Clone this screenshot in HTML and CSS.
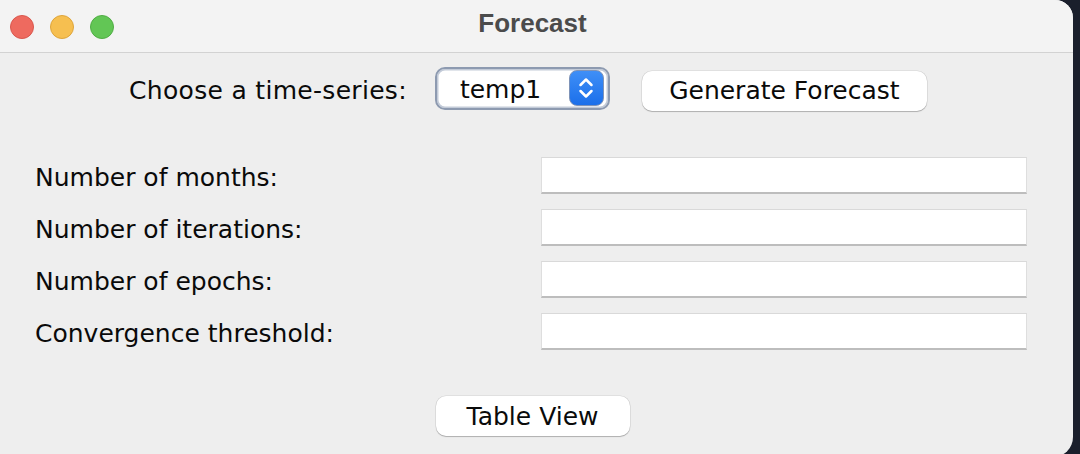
FILE: index.html
```html
<!DOCTYPE html>
<html>
<head>
<meta charset="utf-8">
<link rel="stylesheet" href="styles.css">
</head>
<body>
<div class="window">
  <div class="titlebar">
    <div class="lights">
      <span class="light red"></span>
      <span class="light yellow"></span>
      <span class="light green"></span>
    </div>
    <div class="title">Forecast</div>
  </div>
  <div class="content">
    <div class="toprow">
      <span class="label">Choose a time-series:</span>
      <div class="combo">
        <span class="combo-text">temp1</span>
        <span class="stepper">
          <svg width="20" height="26" viewBox="0 0 20 26">
            <path d="M4.5 10 L10 4.5 L15.5 10" fill="none" stroke="#fff" stroke-width="2.5" stroke-linecap="round" stroke-linejoin="round"/>
            <path d="M4.5 16 L10 21.5 L15.5 16" fill="none" stroke="#fff" stroke-width="2.5" stroke-linecap="round" stroke-linejoin="round"/>
          </svg>
        </span>
      </div>
      <button class="btn gen">Generate Forecast</button>
    </div>
    <div class="form">
      <span class="label">Number of months:</span><div class="field"></div>
      <span class="label">Number of iterations:</span><div class="field"></div>
      <span class="label">Number of epochs:</span><div class="field"></div>
      <span class="label">Convergence threshold:</span><div class="field"></div>
    </div>
    <div class="bottomrow">
      <button class="btn table">Table View</button>
    </div>
  </div>
</div>
</body>
</html>
```
FILE: styles.css
```css
html, body {
  margin: 0;
  padding: 0;
  background: #1a1f2c;
  width: 1080px;
  height: 454px;
  overflow: hidden;
  font-family: "DejaVu Sans", "Liberation Sans", sans-serif;
}
.window {
  width: 1073px;
  height: 457px;
  background: #eeeeee;
  border-radius: 0 18px 20px 0;
  overflow: hidden;
  display: flex;
  flex-direction: column;
}
.titlebar {
  height: 52px;
  flex: none;
  background: #f3f3f3;
  border-bottom: 1px solid #d2d2d2;
  display: flex;
  align-items: center;
  position: relative;
}
.lights {
  display: flex;
  gap: 16px;
  padding-left: 10px;
  margin-top: 1px;
}
.light {
  width: 24px;
  height: 24px;
  border-radius: 50%;
  box-sizing: border-box;
}
.red { background: #ee6a5f; border: 1px solid #d9574d; }
.yellow { background: #f6bf50; border: 1px solid #dea53b; }
.green { background: #62c655; border: 1px solid #50ad44; }
.title {
  position: absolute;
  left: 0;
  right: 0;
  top: 0;
  height: 46px;
  line-height: 46px;
  text-align: center;
  font-family: "Liberation Sans", Arial, sans-serif;
  font-weight: bold;
  font-size: 26px;
  color: #4b4b4b;
  padding-right: 8px;
  pointer-events: none;
}
.content {
  display: flex;
  flex-direction: column;
}
.label {
  font-size: 25px;
  color: #0a0a0a;
  white-space: nowrap;
}
.toprow {
  display: flex;
  align-items: center;
  justify-content: center;
  padding-right: 17px;
  margin-top: 13px;
  height: 44px;
}
.toprow .label {
  margin-right: 28px;
  margin-top: 5px;
  letter-spacing: 0.3px;
}
.combo {
  width: 175px;
  height: 43px;
  box-sizing: border-box;
  border: 2px solid #8d9ab0;
  border-radius: 10px;
  box-shadow: inset 0 0 0 1.5px #c3cbd8;
  background: #fff;
  display: flex;
  align-items: center;
  justify-content: space-between;
  padding: 0 4px 0 23px;
}
.combo-text {
  font-size: 25px;
  color: #0a0a0a;
  margin-top: 2px;
}
.stepper {
  width: 35px;
  height: 36px;
  box-sizing: border-box;
  border-radius: 8px;
  border: 1.5px solid #7e93b8;
  background: linear-gradient(#3f8ff7, #1b6fea);
  display: flex;
  align-items: center;
  justify-content: center;
}
.btn {
  font-family: "DejaVu Sans", "Liberation Sans", sans-serif;
  font-size: 25px;
  color: #0a0a0a;
  background: #ffffff;
  border: none;
  border-radius: 10px;
  box-shadow: 0 1px 1px rgba(0,0,0,0.22), 0 0 0 0.5px rgba(0,0,0,0.12);
  padding: 0;
  height: 40px;
}
.gen {
  width: 285px;
  margin-left: 32px;
  margin-top: 5px;
}
.form {
  display: grid;
  grid-template-columns: 506px 486px;
  grid-auto-rows: 37px;
  row-gap: 15px;
  padding-left: 35px;
  margin-top: 47px;
  align-items: center;
}
.form .label {
  padding-top: 4px;
}
.field {
  height: 37px;
  box-sizing: border-box;
  background: #ffffff;
  border-top: 1px solid #d9d9d9;
  border-left: 1px solid #dedede;
  border-right: 1px solid #dedede;
  border-bottom: 2px solid #bdbdbd;
}
.bottomrow {
  display: flex;
  justify-content: center;
  margin-top: 46px;
  padding-right: 8px;
}
.table {
  width: 194px;
}
```
